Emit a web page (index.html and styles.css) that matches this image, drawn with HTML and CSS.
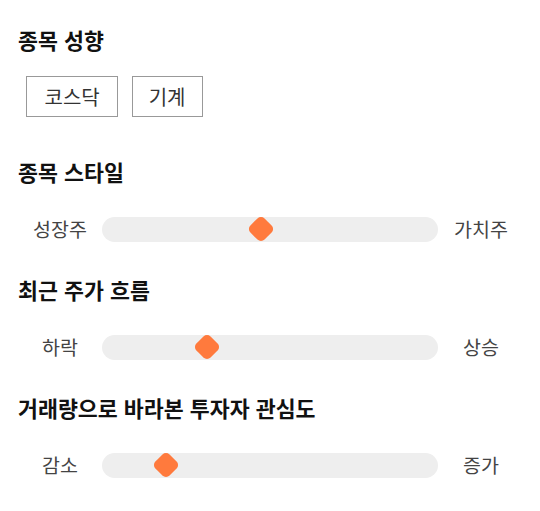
FILE: index.html
```html
<!DOCTYPE html>
<html lang="ko">

<head>
    <meta charset="UTF-8">
    <meta name="viewport" content="width=device-width, initial-scale=1.0">
    <title>종목 분석</title>
    <link rel="stylesheet" href="styles.css">
</head>

<body>
    <div class="panel">
        <div class="section">
            <h2>종목 성향</h2>
            <div class="tags">
                <span class="tag">코스닥</span>
                <span class="tag">기계</span>
            </div>
        </div>

        <div class="section">
            <h2>종목 스타일</h2>
            <div class="slider-row">
                <span class="slider-label">성장주</span>
                <div class="track">
                    <span class="thumb" style="left: 47.3%"></span>
                </div>
                <span class="slider-label">가치주</span>
            </div>
        </div>

        <div class="section">
            <h2>최근 주가 흐름</h2>
            <div class="slider-row">
                <span class="slider-label">하락</span>
                <div class="track">
                    <span class="thumb" style="left: 31.2%"></span>
                </div>
                <span class="slider-label">상승</span>
            </div>
        </div>

        <div class="section">
            <h2>거래량으로 바라본 투자자 관심도</h2>
            <div class="slider-row">
                <span class="slider-label">감소</span>
                <div class="track">
                    <span class="thumb" style="left: 19%"></span>
                </div>
                <span class="slider-label">증가</span>
            </div>
        </div>
    </div>
</body>

</html>
```

FILE: styles.css
```css
body {
    margin: 0;
    background-color: white;
    font-family: "Noto Sans CJK KR", "Noto Sans", sans-serif;
}

.panel {
    padding: 26px 16px 0 18px;
}

.section {
    margin-bottom: 34px;
}

.section:last-child {
    margin-bottom: 0;
}

h2 {
    margin: 0 0 30px 0;
    font-size: 21.7px;
    line-height: 28px;
    font-weight: bold;
    color: #111;
}

.tags {
    display: flex;
    gap: 14px;
    padding-left: 8px;
    margin-top: -8px;
    padding-bottom: 7px;
}

.tag {
    border: 1px solid #999;
    padding: 7px 17px 7px 17.5px;
    font-size: 20px;
    line-height: 25px;
    color: #333;
}

.tag + .tag {
    padding: 7px 16px;
}

.slider-row {
    display: flex;
    align-items: center;
}

.slider-label {
    width: 86px;
    flex-shrink: 0;
    text-align: center;
    font-size: 19.5px;
    line-height: 26px;
    color: #444;
}

.slider-label:first-child {
    width: 84px;
}

.track {
    flex: 1;
    position: relative;
    height: 25px;
    border-radius: 13px;
    background-color: #eeeeee;
}

.thumb {
    position: absolute;
    top: 50%;
    width: 20px;
    height: 20px;
    border-radius: 5px;
    background-color: #ff7a3d;
    transform: translate(-50%, -50%) rotate(45deg);
}
```
